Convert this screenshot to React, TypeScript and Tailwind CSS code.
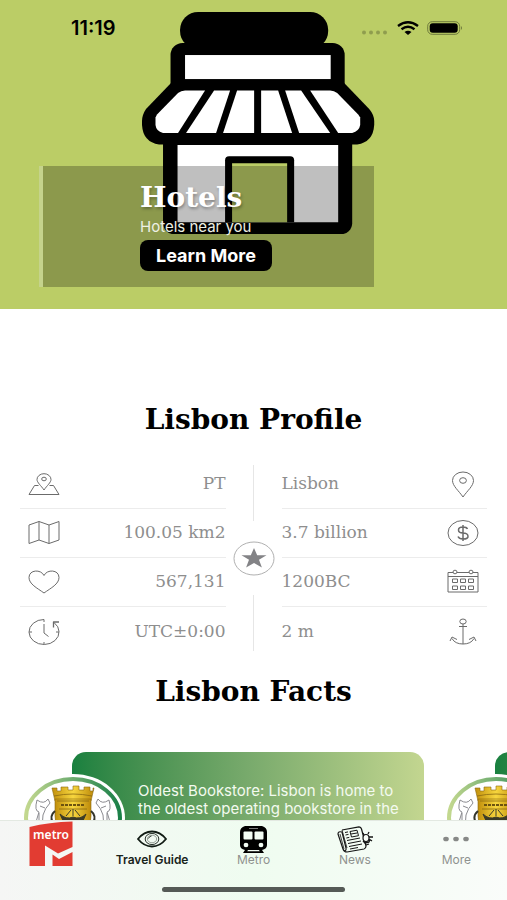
import type { ReactNode } from "react";

const serif = "font-['DejaVu_Serif',serif]";

const StoreIllustration = () => (
  <svg
    aria-hidden="true"
    className="absolute top-3 left-[28%] w-[46%]"
    viewBox="142 12 233 222"
  >
    <rect height="37" rx="18" width="148" x="180" y="12" />
    <rect height="60" rx="12" width="174" x="170.500" y="43" />
    <rect fill="#fff" height="24" width="145.500" x="185" y="55" />
    <path d="M163 138h189v85a11 11 0 0 1-11 11H174a11 11 0 0 1-11-11Z" />
    <path d="M171 83 146 109Q142 115 142 121v4Q143 142 159 144.500H357Q373 142 374 125v-4Q374 115 369 109L344 83Z" />
    <g fill="#fff">
      <path d="M185 90.500h20L178 133H163Q156 131 155.500 125V117.500L157 114.500 178 93Q181 90.500 185 90.500Z" />
      <path d="M214 90.500h16L216 133H186Z" />
      <path d="M237 90.500h17V133H223Z" />
      <path d="M261 90.500h17L292 133H261Z" />
      <path d="M285 90.500h16L330 133H299Z" />
      <path d="M310 90.500h20Q334 90.500 337 93L358 114.500 360 117.500V125Q359 131 352 133H338Z" />
      <path d="M177.500 145H338v77H177.500Z" />
    </g>
    <path d="M225 222V160a4 4 0 0 1 4-4h61a4 4 0 0 1 4 4v62Z" />
    <path d="M232 163h55v59h-55Z" fill="#bbcd66" />
  </svg>
);

const StatusBar = () => (
  <div className="relative flex items-center justify-between pt-4 pr-11 pl-[71px]">
    <time className="font-semibold text-xl leading-6">11:19</time>
    <div className="flex items-center gap-2">
      <svg aria-hidden="true" className="mt-2 w-7" viewBox="0 0 28 5">
        <g fill="#8f9d4e">
          <circle cx="3" cy="2.500" r="2" />
          <circle cx="10" cy="2.500" r="2" />
          <circle cx="17" cy="2.500" r="2" />
          <circle cx="24" cy="2.500" r="2" />
        </g>
      </svg>
      <svg aria-hidden="true" className="w-[22px]" viewBox="0 0 22 14">
        <g fill="none" stroke="#000" strokeWidth="2.400">
          <path d="M1 5Q11-2.500 21 5" />
          <path d="M4.500 8.300Q11 3.300 17.500 8.300" />
        </g>
        <path d="M7.500 11Q11 8.300 14.500 11L11 14Z" />
      </svg>
      <svg aria-hidden="true" className="w-9" viewBox="0 0 36 14">
        <rect
          fill="none"
          height="12.600"
          rx="4.500"
          stroke="#6f7a3c"
          width="32"
          x=".7"
          y=".7"
        />
        <rect height="9.600" rx="3" width="28" x="2.700" y="2.200" />
        <path d="M34 5q2 2 0 4Z" fill="#6f7a3c" />
      </svg>
    </div>
  </div>
);

const LineIcon = ({ children }: { children: ReactNode }) => (
  <svg
    aria-hidden="true"
    className="h-7 w-8 shrink-0"
    fill="none"
    stroke="#6b6b6b"
    strokeLinejoin="round"
    viewBox="0 0 32 28"
  >
    {children}
  </svg>
);

const leftFacts = [
  {
    value: "PT",
    icon: (
      <>
        <path d="M10.500 15.500H6.500L1 24.500H31L25.500 15.500H21.500" />
        <path d="M16 20C13 15.500 9 12.500 9 9.500a7 5.800 0 0 1 14 0C23 12.500 19 15.500 16 20Z" />
        <ellipse cx="16" cy="9" rx="2.300" ry="1.800" />
      </>
    ),
  },
  {
    value: "100.05 km2",
    icon: (
      <>
        <path d="M1 6 11 2.500 21 6 31 2.500V21L21 24.500 11 21 1 24.500Z" />
        <path d="M11 2.500V21M21 6v18.500" />
      </>
    ),
  },
  {
    value: "567,131",
    icon: (
      <path d="M16 25C9 20 1 16 1 9.500 1 1.500 13 1 16 7.500 19 1 31 1.500 31 9.500 31 16 23 20 16 25Z" />
    ),
  },
  {
    value: "UTC±0:00",
    icon: (
      <>
        <path d="M16 1.500A15 12.500 0 1 0 31 13.500Q31 8.500 26 4.500" />
        <path d="M25.500 9.500V4H31" strokeWidth="1.300" />
        <path d="M16 6v9l4.500 3.500M16 1.500V4M16 24v2.500M1 14H4M28 14h3" />
      </>
    ),
  },
];

const rightFacts = [
  {
    value: "Lisbon",
    icon: (
      <>
        <path d="M16 27C12 21 5.500 16 5.500 10.500a10.500 8.500 0 0 1 21 0C26.500 16 20 21 16 27Z" />
        <ellipse cx="16" cy="10.500" rx="3.400" ry="2.800" />
      </>
    ),
  },
  {
    value: "3.7 billion",
    icon: (
      <>
        <ellipse cx="16" cy="14" rx="15" ry="12.500" />
        <path
          d="M20.500 10Q19.500 8 16 8 11.500 8 11.500 11T16 14t5 3-5 3q-4 0-5-2.500M16 6v16"
          strokeWidth="1.500"
        />
      </>
    ),
  },
  {
    value: "1200BC",
    icon: (
      <>
        <path d="M1 4.500H31V24H1ZM1 8.500H31" />
        <ellipse cx="8" cy="4" fill="#fff" rx="2" ry="1.800" />
        <ellipse cx="24" cy="4" fill="#fff" rx="2" ry="1.800" />
        <path d="M5.500 11h5v3.500h-5ZM13.500 11h5v3.500h-5ZM21.500 11h5v3.500h-5ZM5.500 18h5v3.500h-5ZM13.500 18h5v3.500h-5ZM21.500 18h5v3.500h-5Z" />
      </>
    ),
  },
  {
    value: "2 m",
    icon: (
      <>
        <ellipse cx="16" cy="3.500" rx="3.200" ry="2.500" />
        <path d="M16 6V26M12 8.500h8M5 20.500Q8 26 16 26t11-5.500" />
        <path d="M3 23l2-4 5 2.500M29 23l-2-4-5 2.500" />
      </>
    ),
  },
];

const ProfileColumn = ({
  facts,
  reverse = false,
}: {
  facts: typeof leftFacts;
  reverse?: boolean;
}) => (
  <ul className="flex-1 divide-y divide-[#ececec]">
    {facts.map(({ value, icon }) => (
      <li
        className={`flex h-[49px] items-center justify-between ${
          reverse ? "flex-row-reverse pr-2" : "pl-2"
        }`}
        key={value}
      >
        <LineIcon>{icon}</LineIcon>
        <span className={`${serif} text-[#8e8e8e] text-[17px]`}>{value}</span>
      </li>
    ))}
  </ul>
);

const ProfileDivider = () => (
  <div className="flex w-14 flex-col items-center justify-between py-[5px]">
    <div className="h-14 w-px bg-[#e6e6e6]" />
    <svg aria-hidden="true" className="w-[42px]" viewBox="0 0 42 35">
      <ellipse
        cx="21"
        cy="17.500"
        fill="#fff"
        rx="20"
        ry="16.500"
        stroke="#b0b0b0"
      />
      <path
        d="M21 7 24.200 14.200H33.500L26 18.700 28.900 26.500 21 21.900 13.100 26.500 16 18.700 8.500 14.200H17.800Z"
        fill="#838386"
      />
    </svg>
    <div className="h-14 w-px bg-[#e6e6e6]" />
  </div>
);

const Crest = () => (
  <svg
    aria-hidden="true"
    className="absolute top-[22px] left-0 w-[106px]"
    viewBox="0 0 106 88"
  >
    <defs>
      <linearGradient id="ring">
        <stop offset="0" stopColor="#c3d88f" />
        <stop offset=".5" stopColor="#6dac70" />
        <stop offset="1" stopColor="#1b8048" />
      </linearGradient>
      <linearGradient id="gold">
        <stop offset="0" stopColor="#c18f0c" />
        <stop offset=".5" stopColor="#f7d63e" />
        <stop offset="1" stopColor="#bd8a0a" />
      </linearGradient>
    </defs>
    <ellipse cx="53" cy="44" fill="#fff" rx="52" ry="44" />
    <ellipse
      cx="53"
      cy="44"
      fill="#fff"
      rx="47"
      ry="39"
      stroke="url(#ring)"
      strokeWidth="4"
    />
    <g fill="none" stroke="#8b8b90">
      <path d="M17 26q7 5 11-1l2 4q-5 5-7 12-1 6 0 14h-6q-2-9 2-17-5-1-2-12ZM20 32l5 2M19 39v12" />
      <path d="M89 26q-7 5-11-1l-2 4q5 5 7 12 1 6 0 14h6q2-9-2-17 5-1 2-12ZM86 32l-5 2M87 39v12" />
    </g>
    <path
      d="M32 14h5v3h4v-4h7v3h5v-4h6v4h5v-3h6v4h3v-3h1l-3 13H35Z"
      fill="url(#gold)"
      stroke="#8a6a12"
      strokeWidth=".6"
    />
    <path
      d="M35 25H71V42Q71 62 53 68 35 62 35 42Z"
      fill="url(#gold)"
      stroke="#8a6a12"
      strokeWidth=".6"
    />
    <path
      d="M34 22q19-4 38 0M37 27H69M39 35H67"
      fill="none"
      stroke="#8a6a12"
      strokeWidth=".8"
    />
    <path d="M41 31h24" stroke="#6d5310" strokeDasharray="3 1" strokeWidth="2" />
    <path
      d="M53 35V42M40 40q6 6 13 3 7 3 13-3l-4 9H44ZM46 42l5-6M60 42l-5-6"
      fill="#3b3b27"
      stroke="#3b3b27"
    />
    <path
      d="M35 37q-6 5-2 12M71 37q6 5 2 12"
      fill="none"
      stroke="#34352c"
      strokeWidth="2"
    />
  </svg>
);

const FactCard = ({ children }: { children?: ReactNode }) => (
  <article className="relative w-[404px] shrink-0 pl-[52px]">
    <div className="h-[140px] rounded-[14px] bg-linear-to-r from-[#18803f] via-[#78aa6c] to-[#c3d690] pt-[30px] pr-4 pl-[66px]">
      <p className="text-[#f3faef] text-[15px] leading-[18px]">{children}</p>
    </div>
    <Crest />
  </article>
);

const MetroLogo = () => (
  <svg aria-hidden="true" className="w-11" viewBox="0 0 44 45">
    <path
      d="M.5 6Q20 1 43.500.500V26L29 32.500 16 24.500V45H.5Z"
      fill="#e23c32"
    />
    <path d="M23.500 45V33.500L30 38 43.500 31V45Z" fill="#e23c32" />
    <text
      className="font-['Noto_Sans',sans-serif] font-semibold"
      fill="#fff"
      fontSize="12"
      textAnchor="middle"
      x="22"
      y="18"
    >
      metro
    </text>
  </svg>
);

const EyeIcon = () => (
  <svg
    aria-hidden="true"
    className="h-[18px] w-[30px]"
    fill="none"
    stroke="#111b14"
    viewBox="0 0 30 18"
  >
    <path
      d="M1 9Q7 1.500 15 1.500T29 9Q23 16.500 15 16.500T1 9Z"
      strokeWidth="1.800"
    />
    <ellipse cx="15" cy="9" rx="6.800" ry="5.600" strokeWidth=".9" />
    <ellipse cx="15" cy="9" rx="4.600" ry="3.800" strokeWidth=".4" />
    <path d="M11.500 8.500Q12 6.500 14.500 6" strokeWidth=".8" />
  </svg>
);

const TrainIcon = () => (
  <svg aria-hidden="true" className="w-[27px]" viewBox="0 0 27 27">
    <path d="M5 0H22Q27 1.500 27 6V19Q27 23 22 24L24 27H3L5 24Q0 23 0 19V6Q0 1.500 5 0Z" />
    <g fill="#f3fdf4">
      <rect height="8" rx="1" width="9" x="3.500" y="5.500" />
      <rect height="8" rx="1" width="9" x="14.500" y="5.500" />
      <ellipse cx="6" cy="19" rx="2.400" ry="2.200" />
      <ellipse cx="21" cy="19" rx="2.400" ry="2.200" />
      <path d="M8 24h11l.8 1.200H7.200Z" />
      <path d="M9 2h9v1H9Z" fill="#777" />
    </g>
  </svg>
);

const NewsIcon = () => (
  <svg
    aria-hidden="true"
    className="w-9"
    fill="none"
    stroke="#151515"
    strokeLinejoin="round"
    viewBox="0 0 36 27"
  >
    <path
      d="M5 4 22 .8Q24 1 24.500 3L29 20Q29 22.500 27 23L10 26Q7 26 6 23L1 8Q1 5 5 6L9 22Q9.500 25 7 25"
      strokeWidth="1.200"
    />
    <path d="M5 4 10 22M3 8l4 15" strokeWidth=".8" />
    <path d="M8 6.500l3-.6M8.500 9l3-.6M9.300 12l3-.6M13 5.500l7-1.300 1.500 5.500-7 1.300ZM14 8l6-1" />
    <path d="M10 14.500l13-2.500M11 17.500l13-2.500M12 20.500l13-2.500M13 23l8-1.500" />
    <ellipse cx="29" cy="12" fill="#f8fdf7" rx="3" ry="3.500" strokeWidth="1.200" />
    <path
      d="M26 15l2 2 4-1 1-3M31 8l1-2M32 11h4M32 13l3 2M27 9l-1-2M29 19l3-1"
      strokeWidth="1.300"
    />
  </svg>
);

const MoreIcon = () => (
  <svg aria-hidden="true" className="w-[26px]" viewBox="0 0 26 6">
    <g fill="#878987">
      <ellipse cx="3" cy="3" rx="2.800" ry="2.300" />
      <ellipse cx="13" cy="3" rx="2.800" ry="2.300" />
      <ellipse cx="23" cy="3" rx="2.800" ry="2.300" />
    </g>
  </svg>
);

const tabs = [
  { label: "Travel Guide", icon: <EyeIcon />, active: true },
  { label: "Metro", icon: <TrainIcon /> },
  { label: "News", icon: <NewsIcon /> },
  { label: "More", icon: <MoreIcon /> },
];

const TabBar = () => (
  <nav className="fixed inset-x-0 bottom-0 flex h-20 flex-col border-[#e3e9e2] border-t bg-linear-to-r from-[#f5f6f5] via-[#effcf0] to-[#fafcfa]">
    <div className="flex">
      <a className="flex flex-1 items-start justify-center" href="#home">
        <MetroLogo />
      </a>
      {tabs.map(({ label, icon, active }) => (
        <a
          aria-current={active ? "page" : undefined}
          className={`flex flex-1 flex-col items-center whitespace-nowrap pt-1 text-xs leading-[14px] ${
            active ? "font-semibold text-[#18231b]" : "text-[#8f928f]"
          }`}
          href={`#${label}`}
          key={label}
        >
          <span className="flex h-7 items-center">{icon}</span>
          {label}
        </a>
      ))}
    </div>
    <div className="mx-auto mt-auto mb-2 h-[5px] w-[36%] rounded-full bg-[#555a56]" />
  </nav>
);

export default function App() {
  return (
    <div className="min-h-screen overflow-hidden bg-white font-[Inter,sans-serif] text-black">
      <header className="relative bg-[#bbcd66] pb-[22px]">
        <StoreIllustration />
        <StatusBar />
        <section className="relative mt-[126px] ml-[39px] w-[66%] border-[#c5d38c] border-l-4 bg-black/25 pt-3 pb-4 pl-[97px]">
          <h1
            className={`${serif} font-bold text-[28px] text-white leading-10 [text-shadow:1px_2px_3px_rgb(0_0_0/0.3)]`}
          >
            Hotels
          </h1>
          <p className="text-[#eef0e4] text-[15px] leading-[18px]">
            Hotels near you
          </p>
          <button
            className="mt-1 h-[31px] rounded-lg bg-black px-4 font-bold text-lg text-white"
            type="button"
          >
            Learn More
          </button>
        </section>
      </header>

      <main>
        <h2
          className={`${serif} mt-[91px] text-center font-bold text-[28px] leading-10`}
        >
          Lisbon Profile
        </h2>
        <section className="mt-5 flex px-5">
          <ProfileColumn facts={leftFacts} />
          <ProfileDivider />
          <ProfileColumn facts={rightFacts} reverse />
        </section>

        <h2
          className={`${serif} mt-4 text-center font-bold text-[28px] leading-10`}
        >
          Lisbon Facts
        </h2>
        <section className="mt-10 flex gap-[19px] pl-5">
          <FactCard>
            Oldest Bookstore: Lisbon is home to the oldest operating bookstore
            in the
          </FactCard>
          <FactCard />
        </section>
      </main>

      <TabBar />
    </div>
  );
}
